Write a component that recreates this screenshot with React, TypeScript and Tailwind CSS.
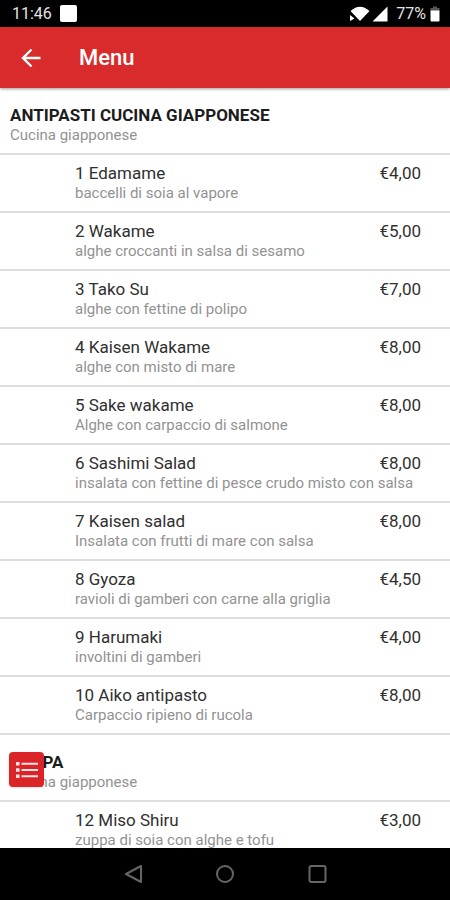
type Dish = { name: string; description: string; price: string };
type Section = { title: string; subtitle: string; dishes: Dish[] };

const sections: Section[] = [
  {
    title: "ANTIPASTI CUCINA GIAPPONESE",
    subtitle: "Cucina giapponese",
    dishes: [
      { name: "1 Edamame", description: "baccelli di soia al vapore", price: "€4,00" },
      { name: "2 Wakame", description: "alghe croccanti in salsa di sesamo", price: "€5,00" },
      { name: "3 Tako Su", description: "alghe con fettine di polipo", price: "€7,00" },
      { name: "4 Kaisen Wakame", description: "alghe con misto di mare", price: "€8,00" },
      { name: "5 Sake wakame", description: "Alghe con carpaccio di salmone", price: "€8,00" },
      { name: "6 Sashimi Salad", description: "insalata con fettine di pesce crudo misto con salsa", price: "€8,00" },
      { name: "7 Kaisen salad", description: "Insalata con frutti di mare con salsa", price: "€8,00" },
      { name: "8 Gyoza", description: "ravioli di gamberi con carne alla griglia", price: "€4,50" },
      { name: "9 Harumaki", description: "involtini di gamberi", price: "€4,00" },
      { name: "10 Aiko antipasto", description: "Carpaccio ripieno di rucola", price: "€8,00" },
    ],
  },
  {
    title: "ZUPPA",
    subtitle: "Cucina giapponese",
    dishes: [{ name: "12 Miso Shiru", description: "zuppa di soia con alghe e tofu", price: "€3,00" }],
  },
];

function StatusBar() {
  return (
    <div className="flex h-[27px] shrink-0 items-center bg-black pr-2.5 pl-3 text-base text-[#e4e4e4]">
      <span>11:46</span>
      <span className="ml-2 size-[17px] rounded-xs bg-white" />
      <span className="ml-auto flex items-center">
        <svg className="mr-0.5 h-4 w-5" viewBox="0 0 20 16" fill="white" aria-hidden="true">
          <path d="M0.5 5Q10 -3.500 19.500 5L10 15Z" />
          <path d="M0 9l4.500 3.500L0 15z" />
        </svg>
        <svg className="mr-2 h-4 w-4" viewBox="0 0 16 16" fill="white" aria-hidden="true">
          <path d="M15.500 0.500V15.500H0.500Z" />
        </svg>
        <span>77%</span>
        <svg className="ml-1 h-4 w-2.5" viewBox="0 0 10 16" aria-hidden="true">
          <path d="M3 0.500H7V2H9.500V5H0.500V2H3Z" fill="#555" />
          <path d="M0.500 4.500H9.500V14.500Q9.500 15.500 8.500 15.500H1.500Q0.500 15.500 0.500 14.500Z" fill="white" />
        </svg>
      </span>
    </div>
  );
}

function AppBar() {
  return (
    <header className="relative flex h-[61px] shrink-0 items-center bg-[#d92b2b] pl-5 text-white shadow-[0_1px_3px_rgba(0,0,0,0.4)]">
      <button type="button" aria-label="Indietro" className="mr-[35px] flex w-6 justify-start">
        <svg className="h-5 w-[22px]" viewBox="0 0 22 20" fill="none" stroke="white" strokeWidth="2.400" aria-hidden="true">
          <path d="M20.500 10H3M11.500 1.500L3 10L11.500 18.500" />
        </svg>
      </button>
      <h1 className="text-[22px] font-medium">Menu</h1>
    </header>
  );
}

function DishRow({ dish }: { dish: Dish }) {
  return (
    <li className="flex h-[58px] items-start justify-between border-b-2 border-[#dedede] pt-2 pr-[29px] pl-[75px]">
      <div className="min-w-0 whitespace-nowrap">
        <h3 className="text-[17px] leading-5 text-[#303030]">{dish.name}</h3>
        <p className="text-[15px] leading-5 text-[#929292]">{dish.description}</p>
      </div>
      <span className="w-0 text-[17px] leading-5 text-[#303030]">
        <span className="float-right">{dish.price}</span>
      </span>
    </li>
  );
}

function NavBar() {
  return (
    <nav className="flex h-[52px] shrink-0 items-center justify-center gap-[72px] bg-black">
      <button type="button" aria-label="Indietro">
        <svg className="size-5" viewBox="0 0 20 20" fill="none" stroke="#666" strokeWidth="2" strokeLinejoin="round" aria-hidden="true">
          <path d="M18 2V18L3 10Z" />
        </svg>
      </button>
      <button type="button" aria-label="Home">
        <svg className="size-5" viewBox="0 0 20 20" fill="none" stroke="#666" strokeWidth="2" aria-hidden="true">
          <circle cx="10" cy="10" r="8" />
        </svg>
      </button>
      <button type="button" aria-label="Recenti">
        <svg className="size-5" viewBox="0 0 20 20" fill="none" stroke="#666" strokeWidth="2" aria-hidden="true">
          <rect x="2.500" y="2" width="16" height="16" rx="2" />
        </svg>
      </button>
    </nav>
  );
}

export default function App() {
  return (
    <div className="flex h-screen flex-col overflow-hidden bg-white font-['Roboto',sans-serif]">
      <StatusBar />
      <AppBar />
      <div className="relative flex min-h-0 flex-1 flex-col">
        <main className="min-h-0 flex-1 overflow-hidden">
          {sections.map((section) => (
            <section key={section.title}>
              <div className="h-[67px] border-b-2 border-[#dedede] px-2.5 pt-[17px]">
                <h2 className="text-[17px] leading-5 font-bold text-[#1c1c1c]">{section.title}</h2>
                <p className="text-[15px] leading-5 text-[#929292]">{section.subtitle}</p>
              </div>
              <ul>
                {section.dishes.map((dish) => (
                  <DishRow key={dish.name} dish={dish} />
                ))}
              </ul>
            </section>
          ))}
        </main>
        <button
          type="button"
          aria-label="Categorie"
          className="absolute bottom-[61px] left-[9px] flex size-[35px] items-center justify-center rounded-sm bg-[#da2427] shadow-sm"
        >
          <svg className="h-4 w-[22px]" viewBox="0 0 22 16" fill="#ffe3e3" aria-hidden="true">
            <path d="M0 0h3.500v3.500H0zM0 6.250h3.500v3.500H0zM0 12.500h3.500V16H0zM5.500 0.700H22v2H5.500zM5.500 7H22v2H5.500zM5.500 13.300H22v2H5.500z" />
          </svg>
        </button>
      </div>
      <NavBar />
    </div>
  );
}
